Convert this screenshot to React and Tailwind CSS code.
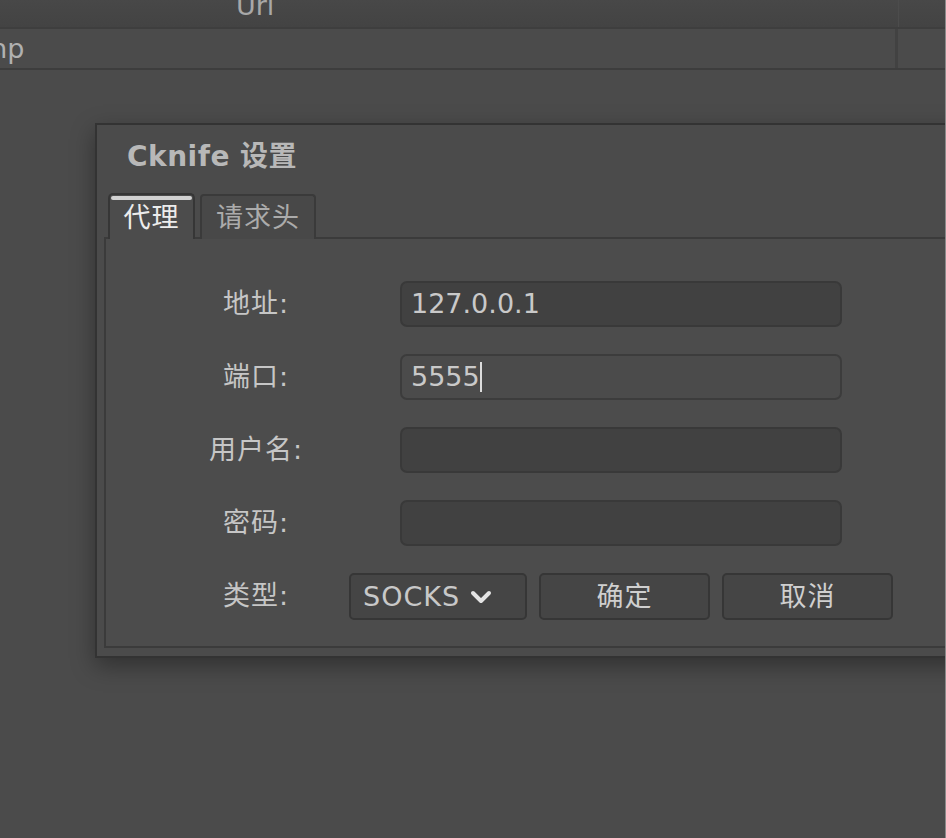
export default function App() {
  const fields = [
    { label: "地址:", value: "127.0.0.1" },
    { label: "端口:", value: "5555", focused: true },
    { label: "用户名:", value: "" },
    { label: "密码:", value: "" },
  ];

  return (
    <div className="relative h-[838px] w-[946px] overflow-hidden border-r border-[#8a8a8a] bg-[#4b4b4b] font-['DejaVu_Sans','Noto_Sans_CJK_SC',sans-serif] text-[27px]">
      {/* ── table behind the dialog ── */}
      <div className="flex h-[27px] bg-gradient-to-b from-[#484848] to-[#434343]">
        <div className="flex w-[898px] overflow-hidden pl-[236px]">
          <span className="mt-[-12px] leading-[36px] text-[#a8a8a8]">Url</span>
        </div>
        <div className="flex-1 border-l border-[#4c4c4c]" />
      </div>
      <div className="h-[2px] bg-[#3e3e3e]" />
      <div className="flex h-[39px]">
        <div className="flex w-[895px] items-center overflow-hidden">
          <span className="ml-[-19px] leading-[36px] text-[#b0b0b0]">mp</span>
        </div>
        <div className="w-[3px] bg-[#424242]" />
        <div className="flex-1" />
      </div>
      <div className="h-[2px] bg-[#3d3d3d]" />

      {/* ── settings dialog ── */}
      <div className="absolute left-[95px] top-[123px] right-[-80px] flex h-[535px] flex-col border-2 border-[#333333] bg-[#4b4b4b] pb-[8px] pl-[7px] shadow-[0_8px_22px_rgba(0,0,0,0.35)]">
        <div className="h-[68px] pl-[23px] pt-[14px] text-[28px] font-bold leading-[36px] tracking-[0.5px] text-[#b8b8b8]">
          Cknife 设置
        </div>

        {/* ── tabs ── */}
        <div className="relative z-10 -mb-[2px] ml-[4px] flex h-[46px] items-stretch gap-[5px]">
          <div className="relative flex w-[87px] items-end justify-center rounded-t-[5px] border-2 border-b-0 border-[#363636] bg-[#4c4c4c] pb-[4px]">
            <div className="absolute left-[1px] right-[1px] top-[1px] h-[4px] rounded-full bg-[#d2d2d2]" />
            <span className="leading-[34px] tracking-[1px] text-[#ececec]">代理</span>
          </div>
          <div className="mt-[1px] flex w-[116px] items-end justify-center rounded-t-[4px] border-2 border-b-0 border-[#3a3a3a] bg-[#484848] pb-[4px]">
            <span className="leading-[34px] tracking-[1px] text-[#ababab]">请求头</span>
          </div>
        </div>

        {/* ── tab panel ── */}
        <div className="flex-1 border-2 border-r-0 border-[#3b3b3b] bg-[#4c4c4c] pl-[57px] pt-[42px]">
          <div className="grid grid-cols-[186px_544px] gap-y-[27px]">
            {fields.map((f) => (
              <div key={f.label} className="contents">
                <div className="flex h-[46px] items-center justify-center tracking-[1px] text-[#c6c6c6]">{f.label}</div>
                <div className="flex justify-center">
                  <div
                    className={`flex h-[46px] w-[442px] items-center rounded-[7px] border-2 px-[9px] ${
                      f.focused ? "border-[#3c3c3c] bg-[#4b4b4b]" : "border-[#393939] bg-[#414141]"
                    }`}
                  >
                    <span className="leading-[34px] text-[#c9c9c9]">{f.value}</span>
                    {f.focused && <span className="h-[30px] w-[2px] bg-[#dcdcdc]" />}
                  </div>
                </div>
              </div>
            ))}

            <div className="flex h-[47px] items-center justify-center tracking-[1px] text-[#c6c6c6]">类型:</div>
            <div className="flex gap-[12px]">
              <div className="flex h-[47px] w-[178px] items-center justify-between rounded-[5px] border-2 border-[#363636] bg-[#454545] pl-[12px] pr-[33px]">
                <span className="leading-[34px] tracking-[1px] text-[#c8c8c8]">SOCKS</span>
                <svg width="22" height="14" viewBox="0 0 22 14" fill="none">
                  <path d="M3 3 L11 11 L19 3" stroke="#e4e4e4" strokeWidth="4" strokeLinecap="round" strokeLinejoin="round" />
                </svg>
              </div>
              <button className="flex h-[47px] w-[171px] items-center justify-center rounded-[5px] border-2 border-[#363636] bg-[#454545] leading-[34px] tracking-[1px] text-[#cfcfcf]">
                确定
              </button>
              <button className="flex h-[47px] w-[171px] items-center justify-center rounded-[5px] border-2 border-[#363636] bg-[#454545] leading-[34px] tracking-[1px] text-[#cfcfcf]">
                取消
              </button>
            </div>
          </div>
        </div>
      </div>
    </div>
  );
}
